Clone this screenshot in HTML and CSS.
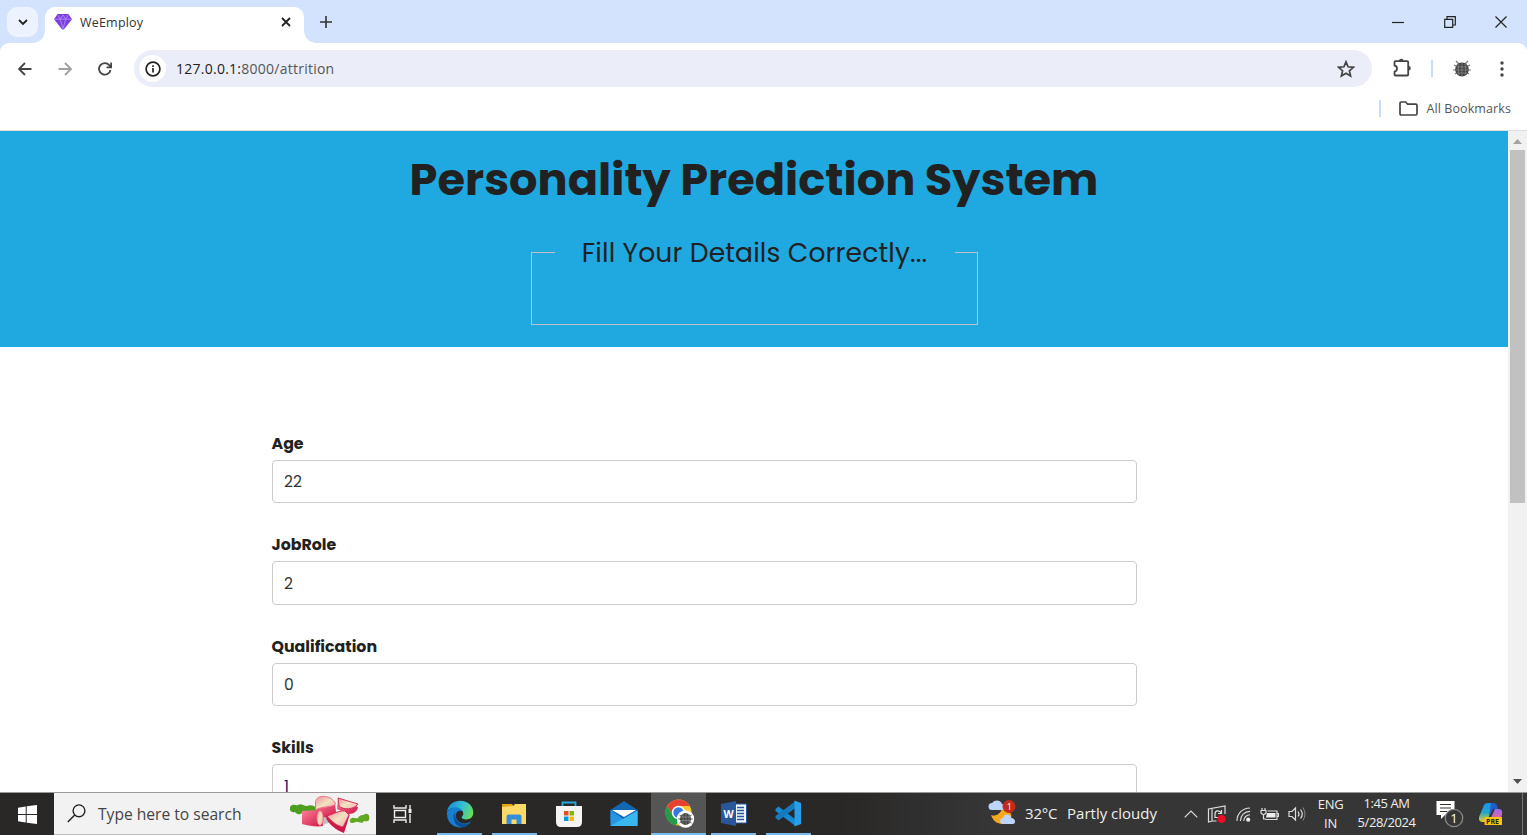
FILE: index.html
```html
<!DOCTYPE html>
<html lang="en">
<head>
<meta charset="utf-8">
<title>WeEmploy</title>
<link rel="stylesheet" href="styles.css">
</head>
<body>
<div class="desktop">
  <header class="tabstrip">
    <div class="tab-search"><svg width="12" height="12" viewBox="0 0 12 12"><path class="ln dark" d="M2 4l4 4 4-4"/></svg></div>
    <div class="tab">
      <svg width="18" height="16" viewBox="0 0 18 16"><path fill="#7b3fe0" d="M3.500 0h11L18 5.200 9.800 15.600H8.200L0 5.200z"/><path d="M1 5.200h16M3.700.8l2.500 4.400L9 14.500l2.800-9.300L14.300.8M6.200 5.200L9 1l2.800 4.200" fill="none" stroke="#b48af5" stroke-width=".9"/></svg>
      <span class="tab-title">WeEmploy</span>
      <svg class="tab-close" width="10" height="10" viewBox="0 0 10 10"><path class="ln dark" d="M1 1l8 8M9 1L1 9"/></svg>
    </div>
    <svg class="newtab" width="12" height="12" viewBox="0 0 12 12"><path d="M6 0v12M0 6h12" fill="none" stroke="#333" stroke-width="1.600"/></svg>
    <div class="window-buttons">
      <svg width="12" height="12" viewBox="0 0 12 12"><path class="thin" d="M0 6.500h12"/></svg>
      <svg width="12" height="12" viewBox="0 0 12 12"><path class="thin" d="M.7 3.300h8v8h-8zM3 3V.7h8.300V9H9"/></svg>
      <svg width="12" height="12" viewBox="0 0 12 12"><path class="thin" d="M.5.5l11 11M11.500.5l-11 11"/></svg>
    </div>
  </header>
  <nav class="toolbar">
    <svg width="14" height="14" viewBox="0 0 14 14"><path class="ln" d="M13.500 7H1.500M7 1L1 7l6 6"/></svg>
    <svg class="forward" width="14" height="14" viewBox="0 0 14 14"><path class="ln" d="M.5 7h12M7 1l6 6-6 6"/></svg>
    <svg width="14" height="14" viewBox="0 0 14 14"><path class="ln" d="M12.500 8A5.800 5.800 0 1 1 11.300 3.200L13 5M13.200.5V5.300H8.500"/></svg>
    <div class="omnibox">
      <span class="site-info"><svg width="16" height="16" viewBox="0 0 16 16"><circle cx="8" cy="8" r="6.900" fill="none" stroke="#222" stroke-width="1.700"/><path d="M8 7v4.600M8 4.200v1.700" stroke="#222" stroke-width="1.700"/></svg></span>
      <span class="url"><b>127.0.0.1:</b>8000/attrition</span>
      <svg class="star" width="18" height="18" viewBox="0 0 18 18"><path d="M9 1.800l2.100 5 5.300.5-4 3.500 1.200 5.300L9 13.300l-4.600 2.800 1.200-5.300-4-3.500 5.300-.5z" fill="none" stroke="#444" stroke-width="1.700"/></svg>
    </div>
    <svg class="puzzle" width="20" height="20" viewBox="0 0 20 20"><path d="M2.500 4.200q0-1 1-1h11.700q1 0 1 1v12.300q0 1-1 1H3.500q-1 0-1-1v-2.800c3.300-.5 3.300-5.700 0-6.200z" fill="none" stroke="#444" stroke-width="1.800" stroke-linejoin="round"/><path d="M7 3a2.300 2.300 0 0 1 4.600 0zM16.500 8a2.300 2.300 0 0 1 0 4.600z" fill="#444"/></svg>
    <i class="rule"></i>
    <svg class="avatar" width="18" height="18" viewBox="0 0 18 18"><path d="M3 1l3 3M15 1l-3 3M1 5l4 2M17 5l-4 2M0 10h18M2 14l3-2M16 14l-3-2" stroke="#777" stroke-width="1.200"/><ellipse cx="9" cy="9.500" rx="6.800" ry="7" fill="#444"/><path d="M3.500 7h11M3 10h12M4 13h10M9 3v13M6 4c-1 4-1 7 0 11M12 4c1 4 1 7 0 11" fill="none" stroke="#999" stroke-width=".6"/></svg>
    <svg class="menu" width="4" height="16" viewBox="0 0 4 16"><g fill="#444"><circle cx="2" cy="2" r="1.700"/><circle cx="2" cy="8" r="1.700"/><circle cx="2" cy="14" r="1.700"/></g></svg>
  </nav>
  <div class="bookmarks">
    <i class="rule"></i>
    <svg width="19" height="15" viewBox="0 0 19 15"><path d="M1 2.200Q1 1 2.200 1h4.500l2 2.200h8Q18 3.200 18 4.400v8.400Q18 14 16.800 14H2.200Q1 14 1 12.800z" fill="none" stroke="#444" stroke-width="1.700"/></svg>
    <span class="bookmarks-label">All Bookmarks</span>
  </div>
  <div class="viewport">
    <main class="page">
      <section class="banner">
        <h1>Personality Prediction System</h1>
        <fieldset><legend>Fill Your Details Correctly...</legend></fieldset>
      </section>
      <form class="details">
        <div class="field"><label for="age">Age</label><input id="age" value="22"></div>
        <div class="field"><label for="role">JobRole</label><input id="role" value="2"></div>
        <div class="field"><label for="qual">Qualification</label><input id="qual" value="0"></div>
        <div class="field"><label for="skills">Skills</label><input id="skills" class="skills" value="1"></div>
      </form>
    </main>
    <aside class="scrollbar">
      <svg width="9" height="5" viewBox="0 0 9 5"><path fill="#a3a3a3" d="M0 5L4.500 0 9 5z"/></svg>
      <div class="thumb"></div>
      <svg class="down" width="9" height="5" viewBox="0 0 9 5"><path fill="#505050" d="M0 0l4.500 5L9 0z"/></svg>
    </aside>
  </div>
  <footer class="taskbar">
    <div class="start"><svg width="19" height="19" viewBox="0 0 19 19"><path fill="#fff" d="M0 2.700L7.700 1.500V9H0zM8.700 1.300L19 0v9H8.700zM0 10h7.700v7.500L0 16.300zM8.700 10H19v9L8.700 17.700z"/></svg></div>
    <div class="search">
      <svg width="19" height="19" viewBox="0 0 19 19"><circle cx="12" cy="6.800" r="5.900" fill="none" stroke="#222" stroke-width="1.400"/><path d="M7.800 11L.8 18" stroke="#222" stroke-width="1.500"/></svg>
      <span class="search-text">Type here to search</span>
      <svg class="rhubarb" width="80" height="40" viewBox="0 0 80 40">
        <defs><linearGradient id="pink" x2="1" y2="1"><stop stop-color="#fb7f98"/><stop offset="1" stop-color="#d01545"/></linearGradient><linearGradient id="flesh" x2="1" y2="1"><stop stop-color="#f58ba0"/><stop offset=".5" stop-color="#f1e3c0"/><stop offset="1" stop-color="#f7a5b2"/></linearGradient></defs>
        <path fill="#4d9e1c" d="M0 13c3-4 6-1 8-2 3-2 5 1 9 1 4-2 8 0 10 3l-2 4-12-1c-3 4-7 2-8 0-4 1-6-2-5-5z"/>
        <path fill="#62a923" d="M60 26c2-4 5-1 8-2 2-4 5-2 7-4 4-1 5 3 4 6-1 2-4 1-5 1-2 4-6 0-8 1-4 2-7 1-6-2z"/>
        <path fill="#a7a0a0" opacity=".65" d="M28 16l22 2-8 10-11 3z"/>
        <path fill="url(#pink)" d="M25 10l2 11c7 5 19 1 19-3l-1-8z"/><path fill="url(#flesh)" stroke="#ee6f87" d="M25.500 9c0-10 17-8 20 1-4 4-14 2-20 6z"/>
        <path fill="url(#pink)" d="M48 5l20 8c-1 7-9 8-12 6l-9-4z"/><path fill="url(#flesh)" stroke="#d93155" d="M48 4l20 6c-4 6-15 6-19 2z"/>
        <path fill="url(#pink)" d="M12 17l18-1 3 16c-6 1-14 0-21-2z"/><ellipse cx="30" cy="24" rx="3.200" ry="7.500" fill="url(#flesh)" stroke="#e65c78" stroke-width=".8"/>
        <path fill="#cc194a" d="M36 21c-1 6 9 15 18 18l6-19-6 8z"/><path fill="url(#flesh)" stroke="#df315a" d="M37 22c7-2 13-6 18-5l4 4-6 12c-6-1-12-6-16-11z"/>
      </svg>
    </div>
    <div class="taskview"><svg width="19" height="18" viewBox="0 0 19 18"><path d="M1 0v3h12V0M1 18v-3h12v3M1.500 5.500h11v7h-11zM17 0v4M17 9v9" fill="none" stroke="#eee" stroke-width="1.400"/><path fill="#eee" d="M15.500 4h3v4h-3z"/></svg></div>
    <div class="app open"><svg width="28" height="28" viewBox="0 0 28 28"><defs><linearGradient id="edge" x1="0" y1=".3" x2="1" y2=".6"><stop stop-color="#168be0"/><stop offset=".55" stop-color="#35c1cf"/><stop offset="1" stop-color="#6ade58"/></linearGradient></defs><path fill="#1480d2" d="M.8 13C5 5 16 6 18 12c-5-3-9 0-8 5 1 6 9 9 15 4C21 30 5 30 1.500 18z"/><path fill="url(#edge)" d="M1 12C2 4 8 .7 14 .7 22 .7 27.300 6 27.300 12.500c0 6-6 8.500-11 6-2-1.500 1-2 1-5C17 7 6 5 1 12z"/><path fill="#075099" d="M9.500 12c-2 7 3 13 11 12 2 0 4-2 5-3C21 29 10 29 8 20c-1-4 0-6 1.500-8z"/></svg></div>
    <div class="app open"><svg width="26" height="22" viewBox="0 0 26 22"><path fill="#e5a50b" d="M1 1h10l2 3H1z"/><path fill="#ffd968" d="M1 4l11-1 2-2h11v20H1z"/><path fill="#358ed7" d="M5.500 21v-7.500q0-2 2-2h11q2 0 2 2V21h-5v-4.500h-5V21z"/></svg></div>
    <div class="app"><svg width="28" height="28" viewBox="0 0 28 28"><path d="M7.500 7V2.500H20.500V7" fill="none" stroke="#27a8df" stroke-width="1.800"/><path fill="#f4f4f4" d="M1 6h26v16q0 5-5 5H6q-5 0-5-5z"/><path fill="#e74c29" d="M9 11h4.500v4.500H9z"/><path fill="#7fba00" d="M14.500 11H19v4.500h-4.500z"/><path fill="#0698dc" d="M9 16.500h4.500V21H9z"/><path fill="#ffb900" d="M14.500 16.500H19V21h-4.500z"/></svg></div>
    <div class="app"><svg width="28" height="26" viewBox="0 0 28 26"><path fill="#1267b4" d="M.5 9L14 0l13.500 9v10H.5z"/><path fill="#2597e2" d="M.5 9L14 18.500l13.500-9V25H.5z"/><path fill="#38b8ef" d="M.5 25L27.500 9.500V25z"/><path fill="#fff" d="M2 9h24L14 16z"/></svg></div>
    <div class="app open active"><svg class="chrome" width="30" height="29" viewBox="0 0 30 29"><circle cx="13.500" cy="13.500" r="13" fill="#ffc928"/><path fill="#e64132" d="M2.200 7a13 13 0 0 1 22.600 0H13.500L8 17z"/><path fill="#229b4b" d="M2.200 7L8 17l6 3-3 6.500A13 13 0 0 1 2.200 7z"/><circle cx="13.500" cy="13.500" r="6.700" fill="#fff"/><circle cx="13.500" cy="13.500" r="5.200" fill="#367be4"/><circle cx="20.500" cy="20" r="8.700" fill="#fff"/><path d="M14.500 16l12 8M26.500 16l-12 8M13.500 20h14" stroke="#555"/><ellipse cx="20.500" cy="20" rx="5.500" ry="6" fill="#444"/><path d="M15 18h11M15 21.500h11M18 15v10M21 14v12M24 15v10" stroke="#999" stroke-width=".6"/></svg></div>
    <div class="app open"><svg width="26" height="25" viewBox="0 0 26 25"><path fill="#f2f5fa" stroke="#2a569b" d="M13 3h12.500v19H13z"/><path d="M16 6.500h7M16 9.500h7M16 12.500h7M16 15.500h7M16 18.500h7" stroke="#2a569b" stroke-width="1.300"/><path fill="#2a569b" d="M0 3L15 0v25L0 22z"/><text class="word-letter" x="2.600" y="16.500">W</text></svg></div>
    <div class="app open"><svg width="28" height="27" viewBox="0 0 28 27"><path d="M1.500 9l3-2.500 17 13V26L1.500 11z" fill="#1689d3"/><path d="M1.500 18l3 2.500L21.500 8V1L1.500 16z" fill="#1479bd"/><path fill="#27a0e8" d="M20.500.5L27 3v21l-6.500 2.500z"/></svg></div>
    <div class="weather"><svg width="29" height="26" viewBox="0 0 29 26"><path fill="#f6a81f" d="M3 15c4 2 10-1 11-7 5 0 11 5 9 11C18 27 6 25 3 15z"/><path fill="#bcd5fb" d="M4 10a3.500 3.500 0 0 1 0-7c3-4 9-3 10 1 4 1 4 6 1 6zM15 24c-4 0-4-6 0-6 1-5 8-4 8 0 5 0 5 6 2 6z"/><circle cx="21" cy="6.500" r="6.500" fill="#c42b1c"/><text class="badge-number" x="18.700" y="10">1</text></svg><span class="temp">32°C</span><span class="sky">Partly cloudy</span></div>
    <div class="tray">
      <svg width="14" height="8" viewBox="0 0 14 8"><path class="tray-line" d="M.7 7.300L7 1l6.300 6.300"/></svg>
      <svg width="20" height="19" viewBox="0 0 20 19"><path class="tray-line" d="M9.500 16H5.500L1.500 17V4l16.500-3v8M5 16V3.500M8 9c0-4 5-4 6-1M14.500 5v3.500H11M11 12.500H8V9"/><circle cx="14.500" cy="14" r="4" fill="#e81123"/></svg>
      <svg width="15" height="15" viewBox="0 0 16 16"><path class="tray-line" d="M1 15C1 7 7 1 15 1M4.700 15C4.700 9 9 4.700 15 4.700M8.300 15c0-4 3-6.700 6.700-6.700"/><circle cx="13" cy="13.500" r="2.200" fill="#eee"/></svg>
      <svg width="19" height="13" viewBox="0 0 19 13"><path class="tray-line" d="M1 2.500h5V5Q3.500 8 1 5zM2 2V0M5 2V0M3.500 6v5H6M7.500 3H17v8.500H5.500M17 5.500h1.500v3H17"/><path fill="#eee" d="M7 5h8.500v4.500H6z"/></svg>
      <svg width="18" height="16" viewBox="0 0 18 16"><path class="tray-line" d="M1 5.500h3L7.500 2v12L4 10.500H1zM10 5.500q2 2.500 0 5M12.500 3.500q3.500 4.500 0 9"/><path d="M15 1.500q4 6.500 0 13" fill="none" stroke="#888"/></svg>
    </div>
    <div class="lang">ENG<br>IN</div>
    <div class="clock"><span>1:45 AM</span><br>5/28/2024</div>
    <svg class="notice" width="28" height="28" viewBox="0 0 28 28"><path fill="#fff" d="M.5 1h18v14H9l-4 4v-4H.5z"/><path d="M4 4.500h11M4 8h11M4 11.500h7" stroke="#333" stroke-width="1.200"/><circle cx="18" cy="18" r="8.700" fill="#363636" stroke="#888" stroke-width="1.300"/><text class="notice-number" x="14.300" y="22.800">1</text></svg>
    <svg class="copilot" width="24" height="22" viewBox="0 0 24 22"><defs><linearGradient id="cp1" x2="0" y2="1"><stop stop-color="#1495ef"/><stop offset=".5" stop-color="#25a6c9"/><stop offset="1" stop-color="#e6cf28"/></linearGradient><linearGradient id="cp2" x2="0" y2="1"><stop stop-color="#9a6bf0"/><stop offset="1" stop-color="#f0618c"/></linearGradient></defs><path fill="url(#cp1)" d="M5 2q1-2 4-2h5l-5 16q-1 3-4 3H3q-4-1-3-5z"/><path fill="#2259ce" d="M12 0h3q3 0 4 6h-5l-4 8z"/><path fill="url(#cp2)" d="M16 6h4q4 0 3 6l-2 5H11z"/><rect x="5.500" y="14" width="17.500" height="8" fill="#ffc20e"/><text class="preview" x="7" y="20.800">PRE</text></svg>
    <i class="peek"></i>
  </footer>
</div>
</body>
</html>
```
FILE: styles.css
```css
* { box-sizing: border-box; }
body { margin: 0; overflow: hidden; font-family: "Open Sans", sans-serif; color: #333; }
svg { display: block; flex: none; }
.desktop { width: 1527px; height: 835px; display: flex; flex-direction: column; overflow: hidden; background: #d3e3fd; }
.ln { fill: none; stroke: #444; stroke-width: 1.8; }
.dark { stroke: #222; }
.thin { fill: none; stroke: #222; stroke-width: 1.2; }

.tabstrip { height: 43px; flex: none; display: flex; background: #d3e3fd; padding-left: 7px; }
.tab-search { width: 31px; height: 30px; margin-top: 7px; border-radius: 10px; background: #ecf3fe; display: grid; place-items: center; }
.tab { position: relative; width: 259px; height: 36px; margin: 7px 0 0 7px; padding: 0 13px 6px 9px; display: flex; align-items: center; background: #fff; border-radius: 10px 10px 0 0; }
.tab::before, .tab::after { content: ""; position: absolute; bottom: 0; width: 12px; height: 12px; }
.tab::before { left: -12px; background: radial-gradient(circle at 0 0, transparent 11.5px, #fff 12px); }
.tab::after { right: -12px; background: radial-gradient(circle at 100% 0, transparent 11.5px, #fff 12px); }
.tab-title { margin-left: 8px; padding-top: 1px; font-size: 12.5px; letter-spacing: .2px; }
.tab-close { margin-left: auto; }
.newtab { margin: 16px 0 0 16px; }
.window-buttons { margin: 16px 20px 0 auto; display: flex; gap: 39.5px; }
.toolbar { height: 51px; flex: none; display: flex; align-items: center; background: #fff; border-radius: 9px 9px 0 0; padding-left: 18px; gap: 26px; }
.forward { opacity: .5; }
.omnibox { width: 1238px; height: 37px; margin-left: -4px; border-radius: 19px; background: #ebeef8; display: flex; align-items: center; padding: 0 17px 0 5px; }
.site-info { width: 27px; height: 27px; border-radius: 50%; background: #fff; display: grid; place-items: center; }
.url { margin-left: 10px; font-size: 14px; letter-spacing: .25px; color: #555; }
.url b { font-weight: 400; color: #222; }
.star { margin-left: auto; }
.puzzle { margin: -2px 0 0 -6px; }
.rule { width: 2px; height: 17px; background: #c8dcfb; }
.toolbar .rule { margin-left: -7px; }
.avatar { margin-left: -6px; }
.menu { margin-left: 3px; }
.bookmarks { height: 37px; flex: none; display: flex; align-items: center; justify-content: flex-end; padding: 0 16px 8px 0; background: #fff; border-bottom: 1px solid #ddd; }
.bookmarks svg { margin: 0 8px 0 18px; }
.bookmarks-label { font-size: 12.5px; white-space: nowrap; letter-spacing: .1px; color: #555; }

.viewport { height: 661px; flex: none; display: flex; overflow: hidden; background: #fff; }
.page { width: 1508px; font-family: Poppins, Inter, sans-serif; color: #212121; overflow: hidden; }
.banner { height: 216px; background: #20a8e0; padding-top: 16px; }
h1 { margin: 0; height: 66px; line-height: 66px; font-size: 44.7px; font-weight: 700; text-align: center; white-space: nowrap; }
fieldset { width: 447px; height: 94px; margin: 18px 0 0 531px; padding: 0; border: 1px solid #c0c0c0; min-width: 0; }
legend { width: 400px; height: 43px; margin: 0 auto; padding: 0; line-height: 43px; text-align: center; font-size: 26.6px; letter-spacing: .12px; }
.details { width: 865px; margin: 84.6px 0 0 271.5px; }
.field { height: 101.5px; }
label { display: block; height: 28px; line-height: 24.6px; font-size: 15.8px; font-weight: 700; }
input { display: block; width: 865px; height: 43.5px; padding: 1px 11.5px 0; border: 1px solid #ccc; border-radius: 4px; color: #333; font: 15.5px Poppins, Inter, sans-serif; }
.skills { color: #1b1464; }
.scrollbar { width: 19px; background: #f1f1f1; display: flex; flex-direction: column; align-items: center; padding: 8px 0; }
.thumb { width: 15px; height: 353px; margin-top: 6px; background: #c1c1c1; }
.down { margin-top: auto; }

.taskbar { height: 43px; flex: none; display: flex; align-items: center; background: linear-gradient(90deg, #292827 55%, #363636 65%); color: #eee; border-top: 1px solid #999; }
.start { width: 54px; display: grid; place-items: center; }
.search { height: 42px; width: 322px; background: #f2f2f2; display: flex; align-items: center; padding: 0 6px 0 13px; border-bottom: 1px solid #bbb; }
.search-text { margin-left: 12px; color: #444; font-size: 15.6px; white-space: nowrap; }
.rhubarb { margin-left: auto; }
.taskview { width: 56.2px; padding-left: 17px; }
.app { width: 54.8px; height: 42px; padding-bottom: 1px; display: grid; place-items: center; position: relative; }
.app.open::after { content: ""; position: absolute; bottom: 0; left: 5px; right: 5px; height: 2px; background: #76b9ed; }
.app.active { background: #555; }
.app.active::after { left: 0; right: 0; }
.chrome { margin-left: 2px; }
.word-letter { font: 700 10.5px "Open Sans", sans-serif; fill: #fff; }
.weather { margin-left: 172.3px; width: 195.5px; height: 42px; padding-bottom: 2px; display: flex; align-items: center; font-size: 15px; white-space: nowrap; }
.temp { margin-left: 8px; width: 42px; letter-spacing: -.2px; }
.badge-number { font: 9px "Open Sans", sans-serif; fill: #fff; }
.tray { width: 122px; display: flex; align-items: center; justify-content: space-between; }
.tray-line { fill: none; stroke: #ddd; stroke-width: 1.2; }
.lang, .clock { height: 42px; padding-top: 2px; font-size: 13px; line-height: 18.5px; text-align: center; white-space: nowrap; }
.lang { width: 30px; margin-left: 10px; letter-spacing: -.2px; }
.clock { width: 60px; padding-top: 1px; margin-left: 11px; letter-spacing: -.4px; }
.notice { margin-left: 19px; }
.notice-number { font: 13px "Open Sans", sans-serif; fill: #fff; }
.copilot { margin-left: 15px; }
.preview { font: 700 7px "Open Sans", sans-serif; fill: #222; }
.peek { width: 1px; height: 42px; margin: 0 4px 0 auto; background: #777; }
```
